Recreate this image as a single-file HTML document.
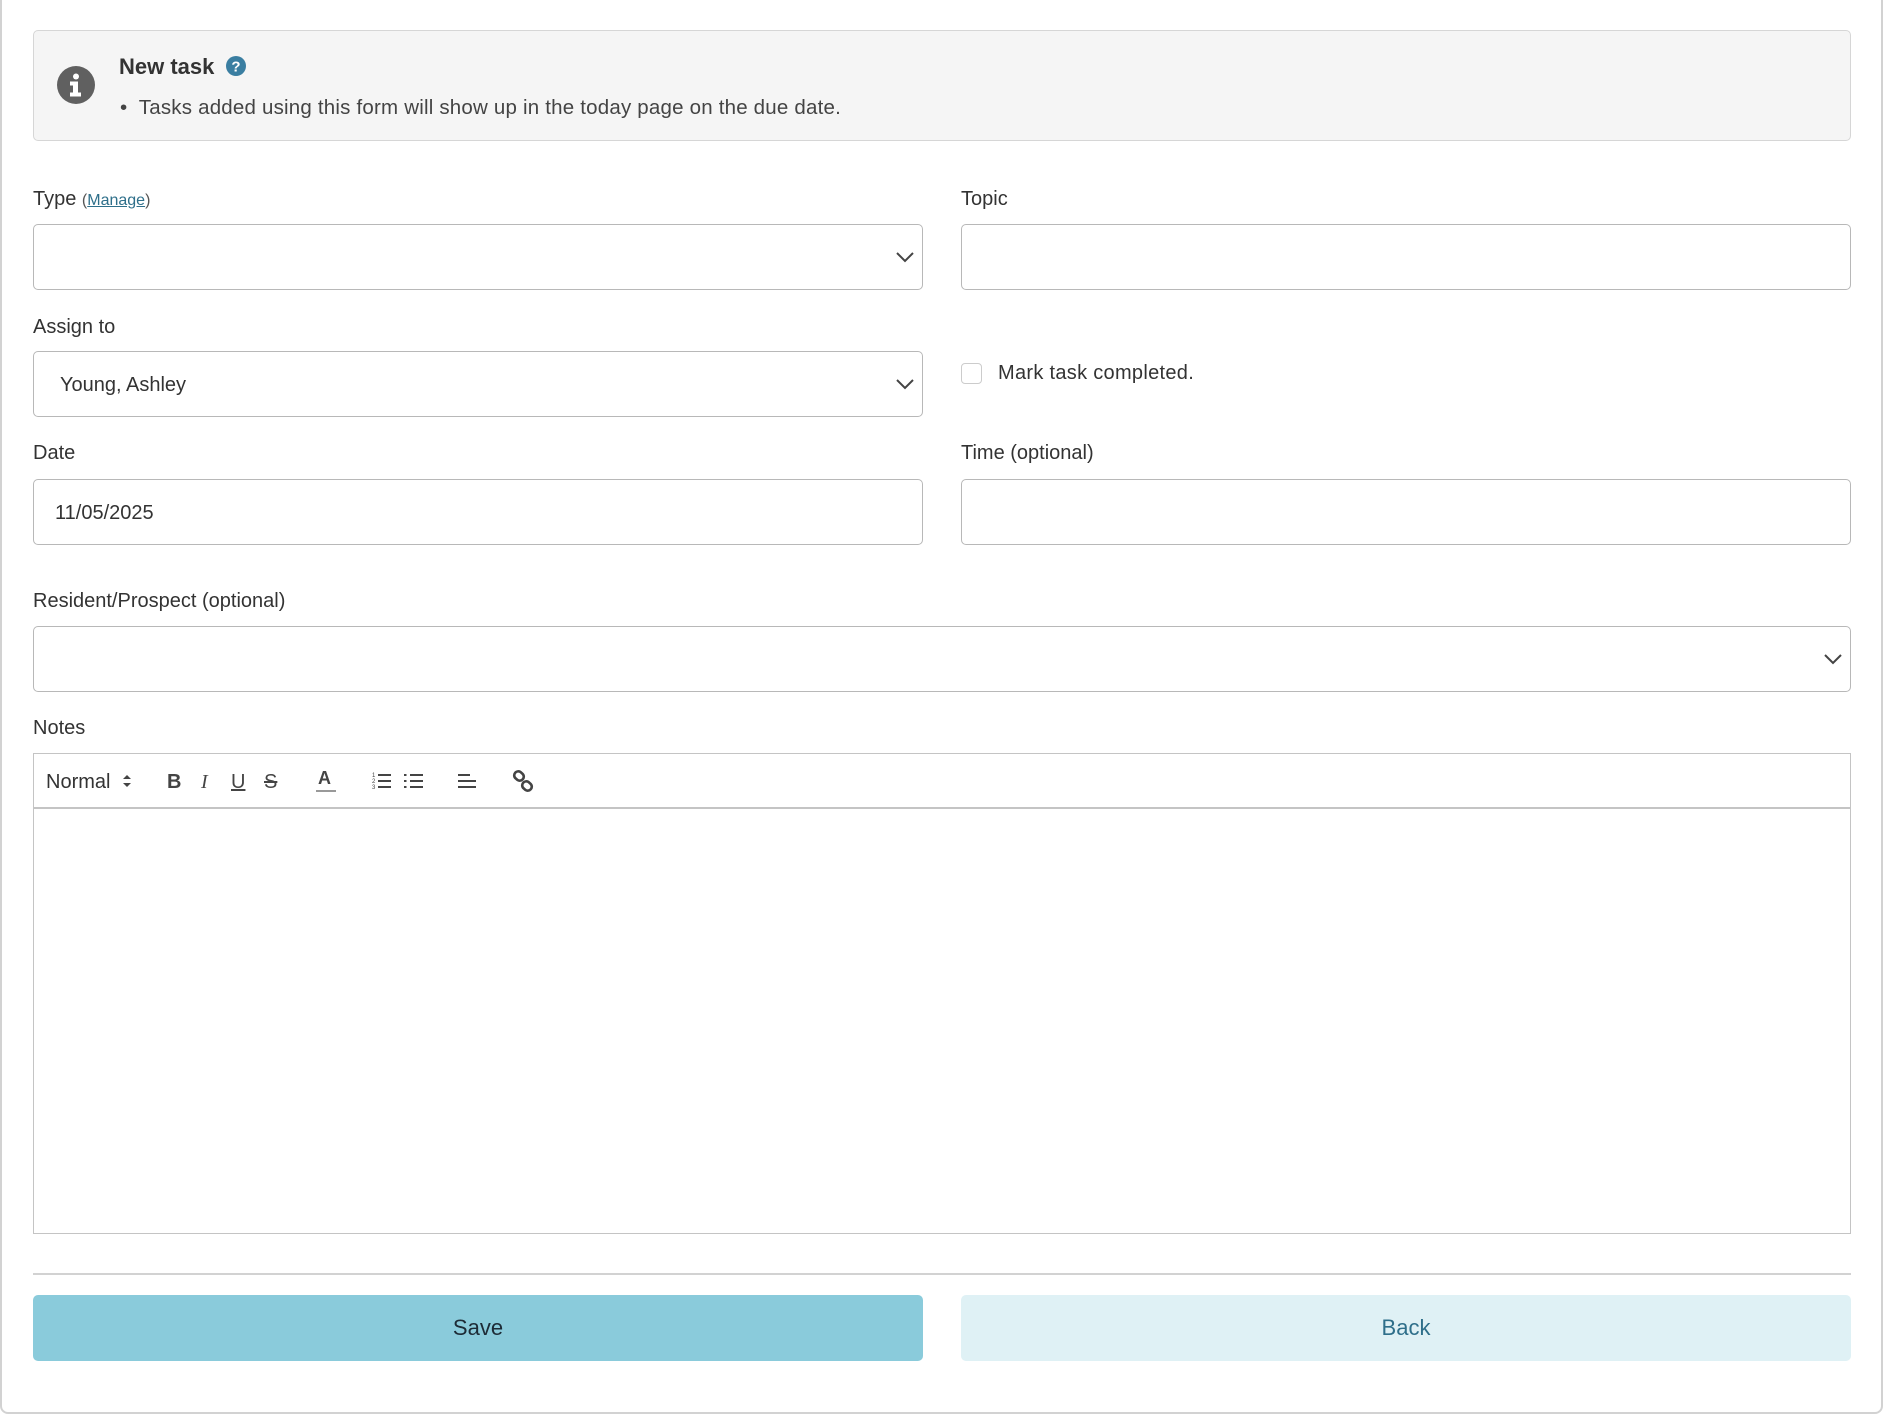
<!DOCTYPE html>
<html><head><meta charset="utf-8"><style>
*{box-sizing:border-box;margin:0;padding:0}
body{width:1884px;height:1414px;background:#fff;font-family:"Liberation Sans",sans-serif;color:#333;position:relative;overflow:hidden}
.card{position:absolute;left:0;top:-10px;width:1883px;height:1424px;border:2px solid #d2d2d2;border-radius:8px}
.abs{position:absolute}
.lbl{position:absolute;font-size:20px;color:#333}
.inp{position:absolute;border:1.5px solid #b8b8b8;border-radius:5px;background:#fff}
.chev{position:absolute;right:8px;top:50%;margin-top:-6px}
</style></head><body>
<div class="card"></div>
<div class="abs" style="left:33px;top:30px;width:1818px;height:111px;background:#f5f5f5;border:1.5px solid #d6d6d6;border-radius:5px"></div>
<svg class="abs" style="left:57px;top:66px" width="38" height="38" viewBox="0 0 38 38"><circle cx="19" cy="19" r="19" fill="#606060"/><circle cx="19" cy="10.5" r="3" fill="#fff"/><path d="M13 15.5h8v11h3v4H13v-4h3v-7h-3z" fill="#fff"/></svg>
<div class="abs" style="left:119px;top:54px;font-size:22px;font-weight:bold;color:#333">New task</div>
<svg class="abs" style="left:226px;top:56px" width="20" height="20" viewBox="0 0 20 20"><circle cx="10" cy="10" r="10" fill="#3a7ea1"/><text x="10" y="15.5" text-anchor="middle" font-family="Liberation Sans" font-weight="bold" font-size="15" fill="#fff">?</text></svg>
<div class="abs" style="left:120px;top:96px;font-size:20.5px;color:#444;letter-spacing:0.2px">•&nbsp; Tasks added using this form will show up in the today page on the due date.</div>

<div class="lbl" style="left:33px;top:188px">Type <span style="font-size:16px;color:#555">(<u style="color:#2e6f8a">Manage</u>)</span></div>
<div class="inp" style="left:33px;top:224px;width:890px;height:66px"><svg class="chev" width="18" height="12" viewBox="0 0 18 12"><path d="M1 2l8 8 8-8" fill="none" stroke="#444" stroke-width="2"/></svg></div>
<div class="lbl" style="left:961px;top:188px">Topic</div>
<div class="inp" style="left:961px;top:224px;width:890px;height:66px"></div>

<div class="lbl" style="left:33px;top:316px">Assign to</div>
<div class="inp" style="left:33px;top:351px;width:890px;height:66px"><div class="abs" style="left:26px;top:22px;font-size:20px;color:#333">Young, Ashley</div><svg class="chev" width="18" height="12" viewBox="0 0 18 12"><path d="M1 2l8 8 8-8" fill="none" stroke="#444" stroke-width="2"/></svg></div>
<div class="abs" style="left:961px;top:363px;width:21px;height:21px;border:1.5px solid #ccc;border-radius:4px"></div>
<div class="lbl" style="left:998px;top:362px;letter-spacing:0.3px">Mark task completed.</div>

<div class="lbl" style="left:33px;top:442px">Date</div>
<div class="inp" style="left:33px;top:479px;width:890px;height:66px"><div class="abs" style="left:21px;top:22px;font-size:20px;color:#333">11/05/2025</div></div>
<div class="lbl" style="left:961px;top:442px">Time (optional)</div>
<div class="inp" style="left:961px;top:479px;width:890px;height:66px"></div>

<div class="lbl" style="left:33px;top:590px">Resident/Prospect (optional)</div>
<div class="inp" style="left:33px;top:626px;width:1818px;height:66px"><svg class="chev" width="18" height="12" viewBox="0 0 18 12"><path d="M1 2l8 8 8-8" fill="none" stroke="#444" stroke-width="2"/></svg></div>

<div class="lbl" style="left:33px;top:717px">Notes</div>
<div class="inp" style="left:33px;top:753px;width:1818px;height:481px;border-radius:0;border-color:#c4c4c4"></div>
<div class="abs" style="left:33px;top:807px;width:1818px;height:1.5px;background:#c4c4c4"></div>
<div class="abs" style="left:46px;top:771px;font-size:20px;color:#333">Normal</div>
<svg class="abs" style="left:122px;top:773px" width="10" height="16" viewBox="0 0 10 16"><path d="M1 6l4-4 4 4zM1 10l4 4 4-4z" fill="#444"/></svg>
<div class="abs" style="left:167px;top:771px;font-size:20px;font-weight:bold;color:#444">B</div>
<div class="abs" style="left:201px;top:771px;font-size:20px;font-style:italic;color:#444;font-family:'Liberation Serif',serif">I</div>
<div class="abs" style="left:231px;top:771px;font-size:20px;text-decoration:underline;color:#444">U</div>
<div class="abs" style="left:264px;top:771px;font-size:20px;text-decoration:line-through;color:#444">S</div>
<div class="abs" style="left:318px;top:768px;font-size:18px;font-weight:bold;color:#444">A</div>
<div class="abs" style="left:316px;top:790px;width:20px;height:2px;background:#999"></div>
<svg class="abs" style="left:372px;top:771px" width="20" height="20" viewBox="0 0 20 20"><g fill="#444"><rect x="6" y="3" width="13" height="2"/><rect x="6" y="9" width="13" height="2"/><rect x="6" y="15" width="13" height="2"/><text x="0" y="6" font-size="6" font-family="Liberation Sans">1</text><text x="0" y="12" font-size="6" font-family="Liberation Sans">2</text><text x="0" y="18" font-size="6" font-family="Liberation Sans">3</text></g></svg>
<svg class="abs" style="left:404px;top:771px" width="20" height="20" viewBox="0 0 20 20"><g fill="#444"><rect x="0" y="3" width="2.5" height="2"/><rect x="0" y="9" width="2.5" height="2"/><rect x="0" y="15" width="2.5" height="2"/><rect x="6" y="3" width="13" height="2"/><rect x="6" y="9" width="13" height="2"/><rect x="6" y="15" width="13" height="2"/></g></svg>
<svg class="abs" style="left:457px;top:771px" width="20" height="20" viewBox="0 0 20 20"><g fill="#444"><rect x="1" y="3" width="12" height="2"/><rect x="1" y="9" width="18" height="2"/><rect x="1" y="15" width="18" height="2"/></g></svg>
<svg class="abs" style="left:512px;top:770px" width="22" height="22" viewBox="0 0 22 22"><g fill="none" stroke="#444" stroke-width="2.6"><rect x="2" y="2" width="10" height="8" rx="4" transform="rotate(40 7 6)"/><rect x="10" y="12" width="10" height="8" rx="4" transform="rotate(40 15 16)"/></g></svg>

<div class="abs" style="left:33px;top:1273px;width:1818px;height:1.5px;background:#d2d2d2"></div>
<div class="abs" style="left:33px;top:1295px;width:890px;height:66px;background:#8acbdb;border-radius:5px;text-align:center;line-height:66px;font-size:22px;color:#1d2b36">Save</div>
<div class="abs" style="left:961px;top:1295px;width:890px;height:66px;background:#dff1f5;border-radius:5px;text-align:center;line-height:66px;font-size:22px;color:#2e6f8a">Back</div>
</body></html>
